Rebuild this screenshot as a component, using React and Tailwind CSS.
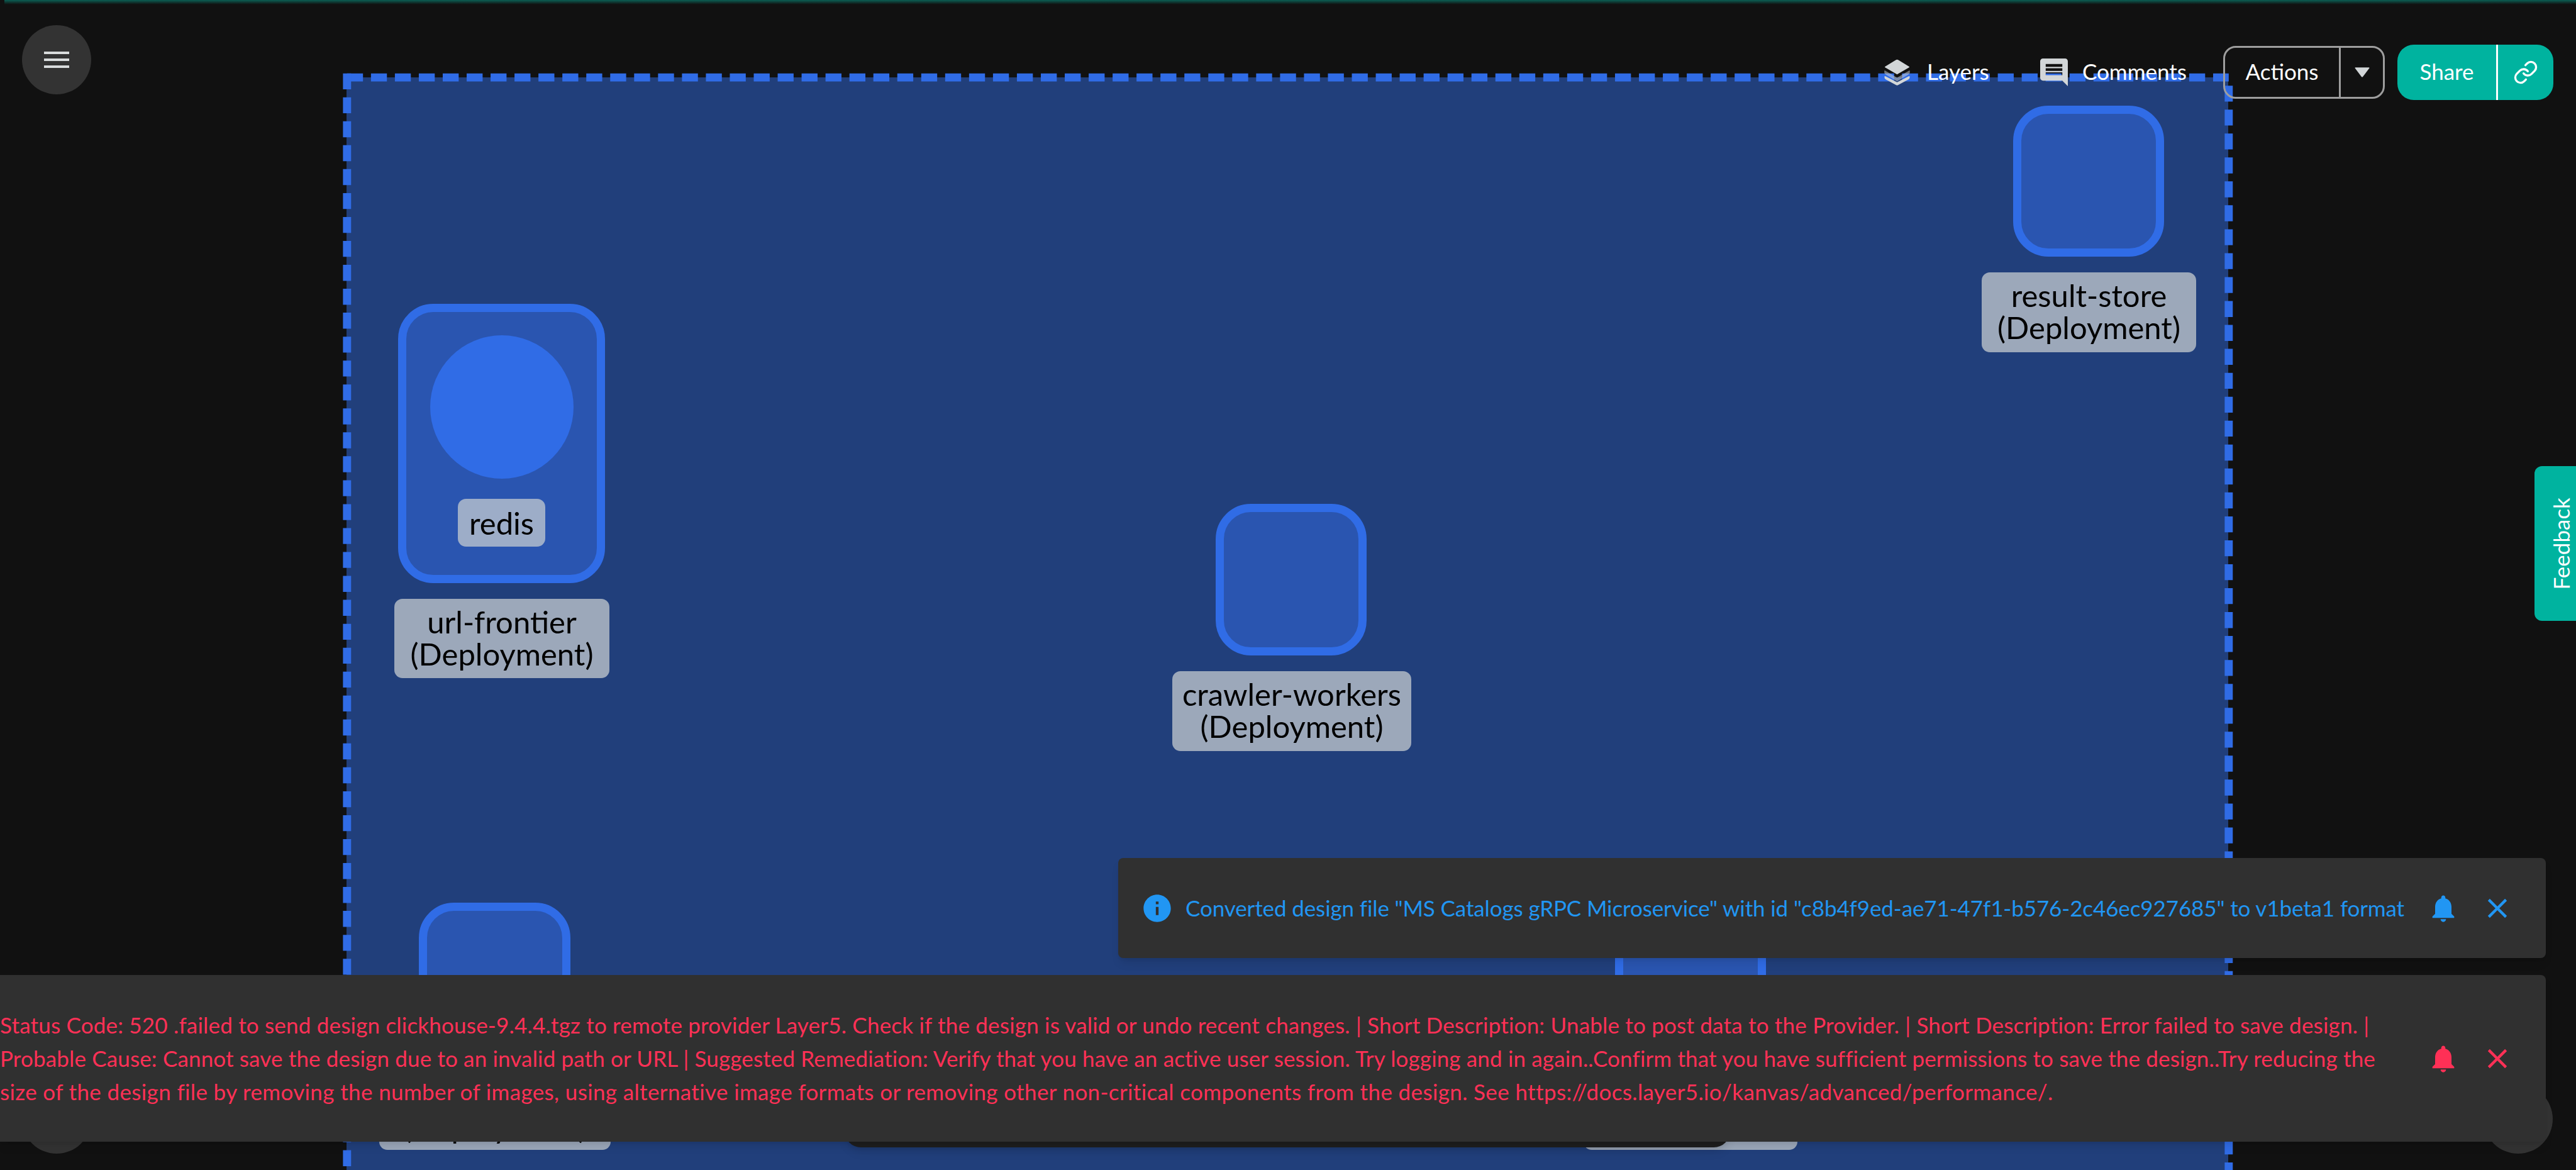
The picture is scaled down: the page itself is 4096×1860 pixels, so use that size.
import React from "react";
import { Link } from "lucide-react";

const font = "font-['Lato','Noto_Sans',sans-serif]";

function LayersIcon() {
  return (
    <svg viewBox="0 0 58 57" className="w-[43px] h-[42px]">
      <path d="M29 33 L5 19 Q0 17 5 15 L26 2 Q29 0 32 2 L53 15 Q58 17 53 19 Z" fill="#d2d6d8" />
      <path d="M2 24 L29 40 L56 24 Q58 30 54 33 L29 48 L4 33 Q0 30 2 24 Z" fill="#d2d6d8" opacity="0.5" />
      <path d="M2 38 Q1 36 4 37 L29 50 L54 37 Q57 36 56 38 Q57 42 53 44 L31 56 Q29 57 27 56 L5 44 Q1 42 2 38 Z" fill="#d2d6d8" />
    </svg>
  );
}

function CommentIcon() {
  return (
    <svg viewBox="2 2 20 20" className="w-[44px] h-[44px]" fill="#d2d6d8">
      <path d="M21.99 4c0-1.1-.89-2-1.99-2H4c-1.1 0-2 .9-2 2v12c0 1.1.9 2 2 2h14l4 4-.01-18zM18 14H6v-2h12v2zm0-3H6V9h12v2zm0-3H6V6h12v2z" />
    </svg>
  );
}

function InfoIcon() {
  return (
    <svg viewBox="0 0 24 24" className="w-[52px] h-[52px] shrink-0" fill="#2196f3">
      <path d="M12 2C6.48 2 2 6.48 2 12s4.48 10 10 10 10-4.48 10-10S17.52 2 12 2zm1 15h-2v-6h2v6zm0-8h-2V7h2v2z" />
    </svg>
  );
}

function BellIcon({ color }) {
  return (
    <svg viewBox="0 0 24 24" className="w-[52px] h-[52px] shrink-0" fill={color}>
      <path d="M12 22c1.1 0 2-.9 2-2h-4c0 1.1.89 2 2 2zm6-6v-5c0-3.07-1.64-5.64-4.5-6.32V4c0-.83-.67-1.5-1.5-1.5s-1.5.67-1.5 1.5v.68C7.63 5.36 6 7.92 6 11v5l-2 2v1h16v-1l-2-2z" />
    </svg>
  );
}

function CloseIcon({ color }) {
  return (
    <svg viewBox="0 0 24 24" className="w-[52px] h-[52px] shrink-0" fill={color}>
      <path d="M19 6.41 17.59 5 12 10.59 6.41 5 5 6.41 10.59 12 5 17.59 6.41 19 12 13.41 17.59 19 19 17.59 13.41 12z" />
    </svg>
  );
}

export default function App() {
  return (
    <div className={`relative w-[4096px] h-[1860px] overflow-hidden bg-[#111111] ${font}`}>
      <div className="absolute left-[7px] right-0 top-0 h-[7px] bg-gradient-to-b from-[#0b5f54] to-transparent"></div>

      {/* canvas group */}
      <div className="absolute left-[551px] top-[123px] w-[2992px] h-[1737px] bg-[#213f7b]"></div>
      <svg viewBox="0 0 5556 2523" className="absolute inset-0 w-full h-full" fill="none" stroke="#306ce6" strokeWidth="17.5" strokeDasharray="34.4 17.2">
        <path d="M748.5 167 H4807" />
        <path d="M748.5 158.3 V2523" />
        <path d="M4807 184.7 V2523" />
      </svg>

      {/* nodes */}
      <div className="absolute left-[633px] top-[483px] w-[329px] h-[444px] flex flex-col items-center border-[13px] border-[#306ce6] rounded-[56px] bg-[#2a55b0]">
        <div className="mt-[37px] w-[228px] h-[228px] rounded-full bg-[#306ce6]"></div>
        <div className="mt-[32px] w-[139px] h-[76px] flex items-center justify-center rounded-[13px] bg-[#9dadc8] text-black text-[49px] leading-none">redis</div>
      </div>
      <div className="absolute left-[627px] top-[952px] w-[342px] h-[126px] pb-[3px] flex flex-col items-center justify-center rounded-[13px] bg-[#9ca8ba] text-black text-[49px] leading-[51px]">
        <span>url-frontier</span>
        <span>(Deployment)</span>
      </div>

      <div className="absolute left-[3201px] top-[168px] w-[240px] h-[240px] border-[13px] border-[#306ce6] rounded-[56px] bg-[#2a55b0]"></div>
      <div className="absolute left-[3151px] top-[433px] w-[341px] h-[127px] pb-[3px] flex flex-col items-center justify-center rounded-[13px] bg-[#9ca8ba] text-black text-[49px] leading-[51px]">
        <span>result-store</span>
        <span>(Deployment)</span>
      </div>

      <div className="absolute left-[1933px] top-[801px] w-[240px] h-[241px] border-[13px] border-[#306ce6] rounded-[56px] bg-[#2a55b0]"></div>
      <div className="absolute left-[1864px] top-[1067px] w-[380px] h-[127px] pb-[3px] flex flex-col items-center justify-center rounded-[13px] bg-[#9ca8ba] text-black text-[49px] leading-[51px]">
        <span>crawler-workers</span>
        <span>(Deployment)</span>
      </div>

      <div className="absolute left-[666px] top-[1435px] w-[241px] h-[241px] border-[13px] border-[#306ce6] rounded-[56px] bg-[#2a55b0]"></div>
      <div className="absolute left-[603px] top-[1700px] w-[368px] h-[128px] pb-[11px] flex items-end justify-center rounded-[13px] bg-[#9ca8ba] text-black text-[49px] leading-[51px]">(Deployment)</div>

      <div className="absolute left-[2568px] top-[1435px] w-[240px] h-[240px] border-[13px] border-[#306ce6] rounded-[56px] bg-[#2a55b0]"></div>
      <div className="absolute left-[2518px] top-[1700px] w-[340px] h-[128px] rounded-[13px] bg-[#9ca8ba]"></div>

      {/* bottom controls behind the alerts */}
      <div className="absolute left-[1343px] top-[1724px] w-[1408px] h-[100px] rounded-b-[26px] bg-[#1e1e1e] shadow-lg"></div>
      <div className="absolute left-[35px] top-[1724px] w-[110px] h-[110px] rounded-full bg-[#333333]"></div>
      <div className="absolute left-[3949px] top-[1724px] w-[110px] h-[110px] rounded-full bg-[#333333]"></div>

      {/* menu button */}
      <button className="absolute left-[35px] top-[40px] w-[110px] h-[110px] flex flex-col items-center justify-center gap-[7px] rounded-full bg-[#333333]">
        <span className="w-[40px] h-[4px] bg-[#d9dcdd]"></span>
        <span className="w-[40px] h-[4px] bg-[#d9dcdd]"></span>
        <span className="w-[40px] h-[4px] bg-[#d9dcdd]"></span>
      </button>

      {/* toolbar */}
      <div className="absolute right-[36px] top-[71px] h-[88px] flex items-center text-white text-[35px]">
        <LayersIcon />
        <span className="ml-[26px] w-[95px] pb-[3px]">Layers</span>
        <span className="ml-[85px]"><CommentIcon /></span>
        <span className="ml-[23px] w-[166px] pb-[3px] whitespace-nowrap">Comments</span>
        <div className="ml-[58px] w-[257px] h-[84px] flex items-stretch border-[3px] border-[#9e9e9e] rounded-[20px]">
          <div className="w-[184px] pb-[3px] flex items-center justify-center border-r-[3px] border-[#9e9e9e]">Actions</div>
          <div className="flex-1 flex items-center justify-center">
            <svg viewBox="0 0 33 21" className="w-[24px] h-[16px]"><path d="M1 1.5 Q0 0 2 0 H31 Q33 0 32 1.500 L18 20 Q16.500 21.500 15 20 Z" fill="#d2d6d8" /></svg>
          </div>
        </div>
        <div className="ml-[20px] w-[248px] h-[88px] flex items-stretch rounded-[26px] bg-[#00b39f]">
          <div className="w-[160px] pb-[3px] flex items-center justify-center border-r-[3px] border-white">Share</div>
          <div className="flex-1 flex items-center justify-center"><Link className="w-[40px] h-[40px]" strokeWidth={2} /></div>
        </div>
      </div>

      {/* feedback tab */}
      <div className="absolute right-0 top-[741px] w-[66px] h-[246px] flex items-center justify-center rounded-l-[12px] bg-[#00b39f] text-white text-[35px]">
        <span className="-rotate-90 whitespace-nowrap translate-x-[9px]">Feedback</span>
      </div>

      {/* alerts */}
      <div className="absolute left-[1778px] top-[1364px] w-[2270px] h-[159px] flex items-center pl-[36px] rounded-[8px] bg-[#303030] shadow-lg text-[#2196f3] text-[35px]">
        <InfoIcon />
        <span className="ml-[19px] w-[1934px] whitespace-nowrap tracking-[-0.11px]">Converted design file "MS Catalogs gRPC Microservice" with id "c8b4f9ed-ae71-47f1-b576-2c46ec927685" to v1beta1 format</span>
        <span className="ml-[40px]"><BellIcon color="#2196f3" /></span>
        <span className="ml-[34px]"><CloseIcon color="#2196f3" /></span>
      </div>
      <div className="absolute left-0 top-[1550px] w-[4048px] h-[265px] flex items-center rounded-r-[8px] bg-[#303030] shadow-lg text-[#ff3056] text-[35px] leading-[53px]">
        <div className="w-[3819px] shrink-0 whitespace-nowrap">
          <p className="tracking-[0.2px]">Status Code: 520 .failed to send design clickhouse-9.4.4.tgz to remote provider Layer5. Check if the design is valid or undo recent changes. | Short Description: Unable to post data to the Provider. | Short Description: Error failed to save design. |</p>
          <p className="tracking-[0.15px]">Probable Cause: Cannot save the design due to an invalid path or URL | Suggested Remediation: Verify that you have an active user session. Try logging and in again..Confirm that you have sufficient permissions to save the design..Try reducing the</p>
          <p className="tracking-[0.37px]">size of the design file by removing the number of images, using alternative image formats or removing other non-critical components from the design. See https://docs.layer5.io/kanvas/advanced/performance/.</p>
        </div>
        <span className="ml-[40px]"><BellIcon color="#ff3056" /></span>
        <span className="ml-[34px]"><CloseIcon color="#ff3056" /></span>
      </div>
    </div>
  );
}
